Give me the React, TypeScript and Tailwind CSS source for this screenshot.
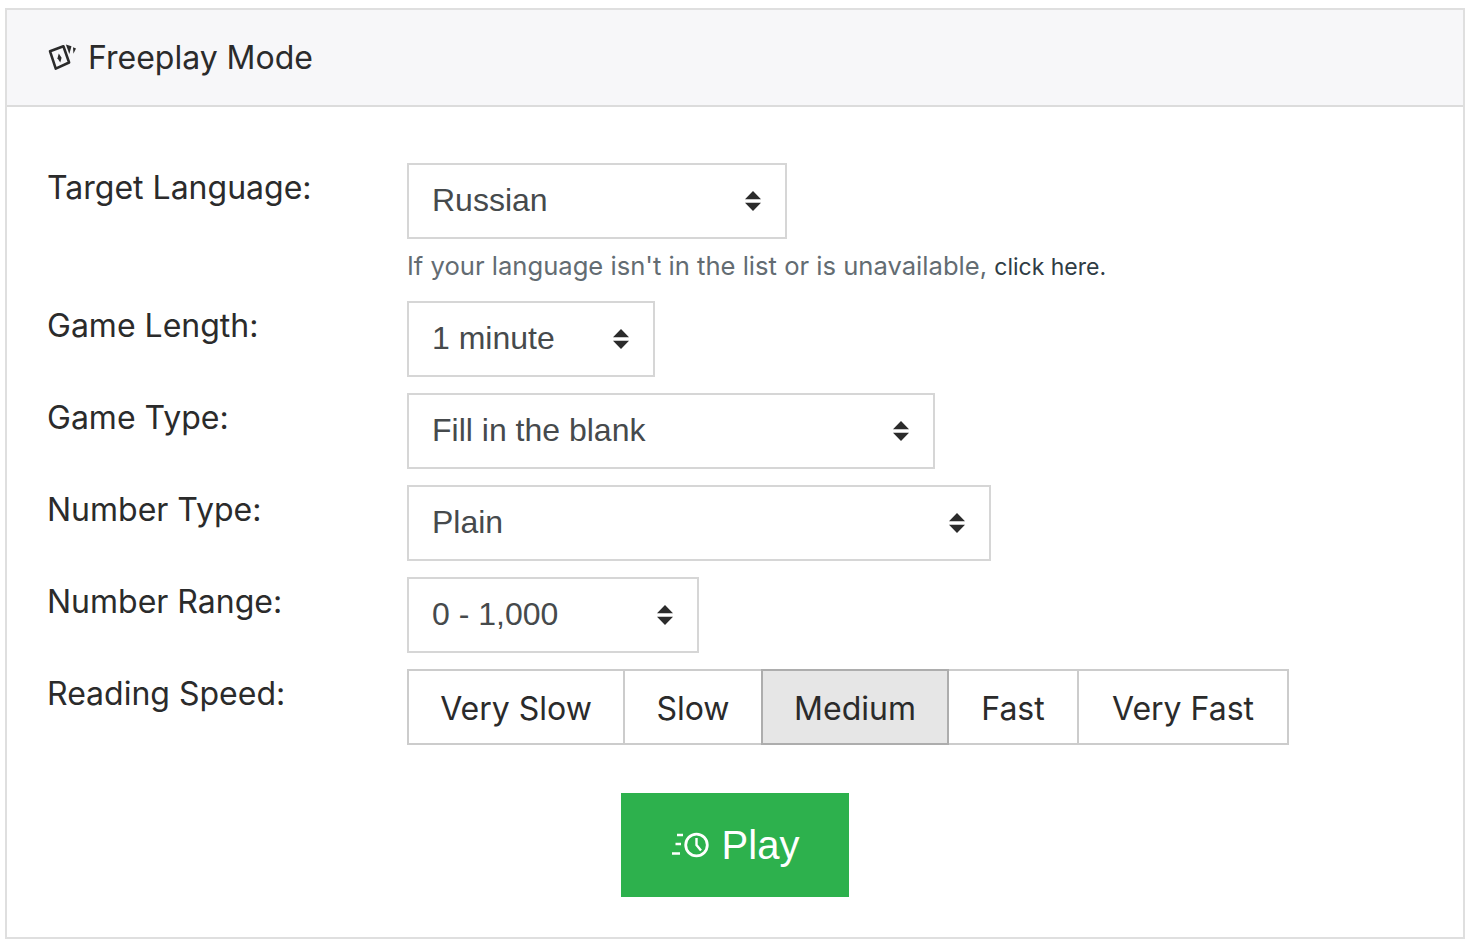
import { ReactNode } from 'react'

function CardsIcon() {
  return (
    <svg viewBox="1 1 26 26" className="h-[28px] w-[28px]" fill="#2b2b2b">
      <path d="M2.9 7.8L15.3 3.1 20.6 18.2 8.2 23.9z" fill="none" stroke="#2b2b2b" strokeWidth="2.4" strokeLinejoin="round" />
      <path d="M11 9.8l2.6 3.9-1.2 4.4-2.6-3.9z" />
      <path d="M17.6 1.4l5.2 1.6-2 7.4z" />
      <path d="M24.2 4l2.8 1.1-2.4 5z" />
    </svg>
  )
}

function FastClockIcon() {
  return (
    <svg viewBox="0 0 39 28" className="h-[28px] w-[39px]" fill="none" stroke="#fff">
      <circle cx="25.5" cy="14" r="10.8" strokeWidth="2.8" />
      <path d="M25.5 7V14l4.5 5.5" strokeWidth="2.4" />
      <path d="M6 4h6M4.5 13h5.5M1 22.5h8" strokeWidth="2.4" />
    </svg>
  )
}

function SelectArrows() {
  return (
    <svg viewBox="0 0 16 20" className="pointer-events-none absolute top-[28px] right-[26px] h-[20px] w-[16px]" fill="#2b2b2b">
      <path d="M8 0l8 8.2H0zM8 20L0 11.8h16z" />
    </svg>
  )
}

function Select({ value, width }: { value: string; width: string }) {
  return (
    <div className={`relative ${width}`}>
      <select
        defaultValue={value}
        className='h-[76px] w-full appearance-none rounded-none border-2 border-[#d6d6d6] bg-white pb-[2px] pl-[23px] font-["Liberation_Sans",sans-serif] text-[32px] text-[#464a4c]'
      >
        <option>{value}</option>
      </select>
      <SelectArrows />
    </div>
  )
}

function Row({ label, children }: { label: string; children: ReactNode }) {
  return (
    <div className="flex">
      <label className="w-[360px] shrink-0 pt-[4px] text-[32px] leading-[42px] text-[#2b2b2b]">{label}</label>
      {children}
    </div>
  )
}

const speeds = [
  { label: 'Very Slow', width: 'w-[218px]' },
  { label: 'Slow', width: 'w-[140px]' },
  { label: 'Medium', width: 'w-[188px]' },
  { label: 'Fast', width: 'w-[132px]' },
  { label: 'Very Fast', width: 'w-[212px]' },
]

export default function App() {
  return (
    <div className='min-h-[949px] bg-white px-[5px] pt-[8px] font-["Inter","Liberation_Sans",sans-serif]'>
      <div className="h-[931px] border-2 border-[#dfdfdf]">
        {/* Header */}
        <div className="flex h-[97px] items-center gap-[12px] border-b-2 border-[#dcdcdc] bg-[#f7f7f9] pl-[41px] text-[#2b2b2b]">
          <CardsIcon />
          <span className="text-[32px] leading-none">Freeplay Mode</span>
        </div>

        <form className="px-[40px] pt-[56px]">
          <Row label="Target Language:">
            <div>
              <Select value="Russian" width="w-[380px]" />
              <p className="mt-[11px] mb-[20px] h-[31px] text-[25.6px] leading-[31px] whitespace-nowrap text-[#636c72]">
                If your language isn't in the list or is unavailable,{' '}
                <a className="text-[23px] text-[#2f3c44]">click here.</a>
              </p>
            </div>
          </Row>
          <div className="flex flex-col gap-[16px]">
            <Row label="Game Length:">
              <Select value="1 minute" width="w-[248px]" />
            </Row>
            <Row label="Game Type:">
              <Select value="Fill in the blank" width="w-[528px]" />
            </Row>
            <Row label="Number Type:">
              <Select value="Plain" width="w-[584px]" />
            </Row>
            <Row label="Number Range:">
              <Select value="0 - 1,000" width="w-[292px]" />
            </Row>
            <Row label="Reading Speed:">
              <div className="flex">
                {speeds.map((s, i) => (
                  <button
                    key={s.label}
                    type="button"
                    className={`h-[76px] border-2 pt-[4px] text-[32px] text-[#2b2b2b] ${s.width} ${i > 0 ? '-ml-[2px]' : ''} ${
                      s.label === 'Medium' ? 'relative border-[#adadad] bg-[#e6e6e6]' : 'border-[#cccccc] bg-white'
                    }`}
                  >
                    {s.label}
                  </button>
                ))}
              </div>
            </Row>
          </div>
          <div className="mt-[48px] flex justify-center">
            <button
              type="button"
              className='flex h-[104px] w-[228px] items-center justify-center gap-[12px] bg-[#2db14d] font-["Liberation_Sans",sans-serif] text-[40px] text-white'
            >
              <FastClockIcon />
              Play
            </button>
          </div>
        </form>
      </div>
    </div>
  )
}
